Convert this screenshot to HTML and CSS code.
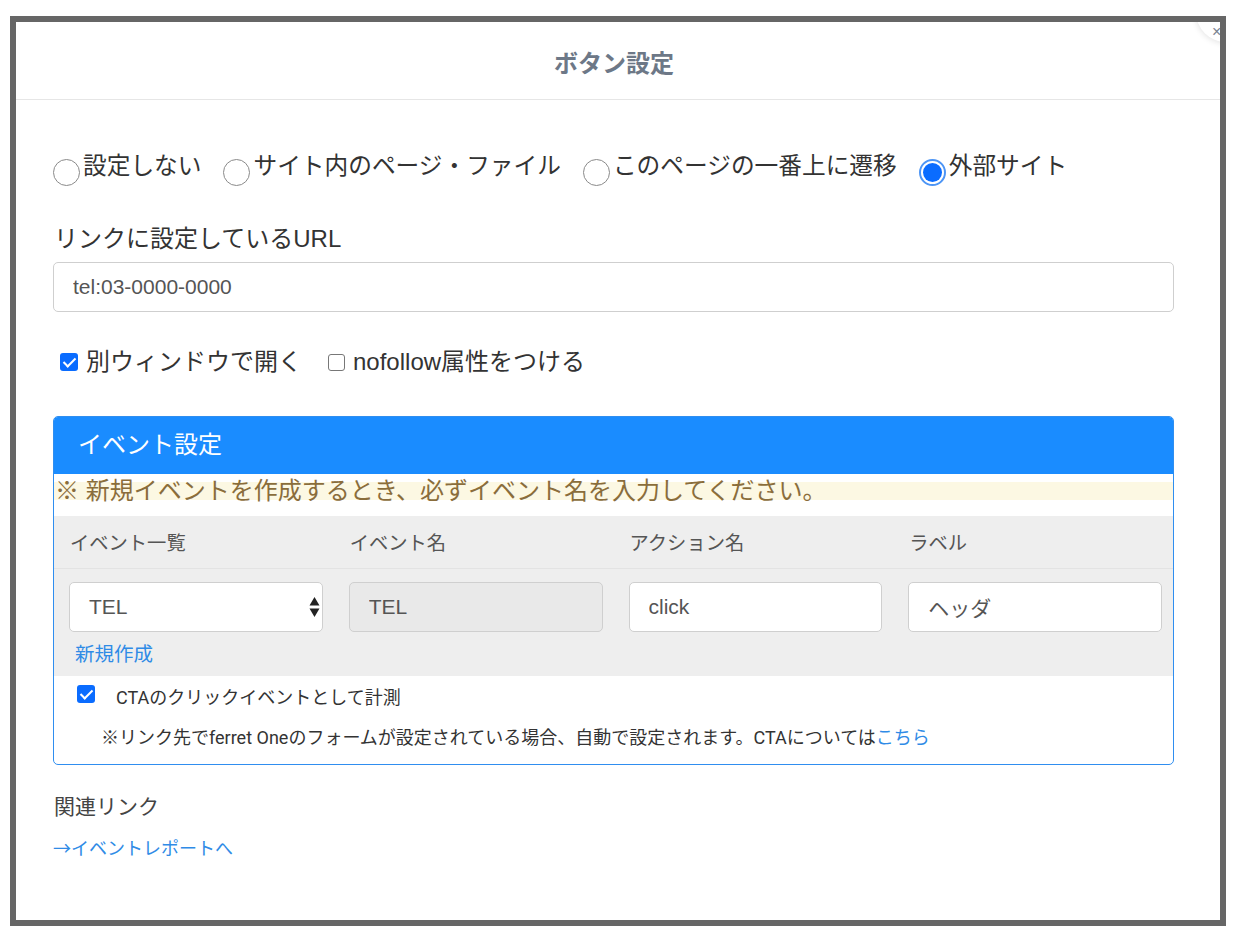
FILE: index.html
```html
<!DOCTYPE html>
<html lang="ja">

<head>
    <meta charset="UTF-8">
    <title>ボタン設定</title>
    <link rel="stylesheet" href="styles.css">
</head>

<body>
    <div class="modal">
        <span class="close">×</span>
        <div class="modal-header">
            <h2>ボタン設定</h2>
        </div>

        <div class="modal-body">
            <!-- リンク先の種類 -->
            <div class="radio-row">
                <label class="radio"><input type="radio" name="link"><span>設定しない</span></label>
                <label class="radio"><input type="radio" name="link"><span>サイト内のページ・ファイル</span></label>
                <label class="radio"><input type="radio" name="link"><span>このページの一番上に遷移</span></label>
                <label class="radio"><input type="radio" name="link" checked><span>外部サイト</span></label>
            </div>

            <p class="field-label">リンクに設定しているURL</p>
            <input class="text-input url-input" type="text" value="tel:03-0000-0000">

            <div class="check-row">
                <label class="check"><input type="checkbox" checked><span>別ウィンドウで開く</span></label>
                <label class="check"><input type="checkbox"><span>nofollow属性をつける</span></label>
            </div>

            <!-- イベント設定 -->
            <div class="event-panel">
                <div class="event-head">イベント設定</div>
                <div class="event-warning">※ 新規イベントを作成するとき、必ずイベント名を入力してください。</div>

                <div class="event-table">
                    <div class="event-row event-row-head">
                        <div class="cell">イベント一覧</div>
                        <div class="cell">イベント名</div>
                        <div class="cell">アクション名</div>
                        <div class="cell">ラベル</div>
                    </div>
                    <div class="event-row">
                        <div class="cell">
                            <div class="text-input select">
                                <span>TEL</span>
                                <svg width="11" height="22" viewBox="0 0 11 22">
                                    <path d="M5.5 1 L10.5 9.5 H0.5 Z" fill="#222" />
                                    <path d="M5.5 21 L10.5 12.5 H0.5 Z" fill="#222" />
                                </svg>
                            </div>
                            <a class="new-link" href="#">新規作成</a>
                        </div>
                        <div class="cell"><input class="text-input" type="text" value="TEL" disabled></div>
                        <div class="cell"><input class="text-input" type="text" value="click"></div>
                        <div class="cell"><input class="text-input" type="text" value="ヘッダ"></div>
                    </div>
                </div>

                <div class="cta">
                    <label class="cta-check"><input type="checkbox" checked><span>CTAのクリックイベントとして計測</span></label>
                    <p class="cta-note">※リンク先でferret Oneのフォームが設定されている場合、自動で設定されます。CTAについては<a href="#">こちら</a></p>
                </div>
            </div>

            <p class="related-title">関連リンク</p>
            <a class="related-link" href="#">→イベントレポートへ</a>
        </div>
    </div>
</body>

</html>
```

FILE: styles.css
```css
* {
    margin: 0;
    padding: 0;
    box-sizing: border-box;
}

body {
    background: #fff;
    font-family: "Liberation Sans", "Noto Sans CJK JP", sans-serif;
    color: #333;
}

a {
    color: #2f8be6;
    text-decoration: none;
}

.modal {
    position: relative;
    margin: 16px 12px 0 10px;
    height: 910px;
    border: 6px solid #666;
    background: #fff;
    overflow: hidden;
}

.close {
    position: absolute;
    left: 1180px;
    top: -40px;
    width: 60px;
    height: 60px;
    border-radius: 50%;
    background: #fff;
    box-shadow: 0 1px 6px rgba(0, 0, 0, 0.12);
    color: #7a8390;
    font-size: 16px;
    line-height: 16px;
    padding: 42px 0 0 16px;
}

.modal-header {
    height: 78px;
    border-bottom: 1px solid #e6e6e6;
    display: flex;
    align-items: center;
    justify-content: center;
    padding-right: 8px;
}

.modal-header h2 {
    font-size: 24px;
    font-weight: bold;
    color: #6d7887;
    padding-top: 2px;
}

.modal-body {
    padding: 48px 46px 0 37px;
}

/* radio */
.radio-row {
    display: flex;
    gap: 22px;
    height: 36px;
}

.radio {
    display: flex;
    align-items: center;
    font-size: 23.7px;
    line-height: 36px;
}

.radio input {
    appearance: none;
    width: 27px;
    height: 27px;
    border: 1.5px solid #8a8a8a;
    border-radius: 50%;
    margin: 12px 3px 0 0;
    background: #fff;
}

.radio input:checked {
    border: 2px solid #4d95f5;
    padding: 2px;
    background: #0a6cff;
    background-clip: content-box;
}

.field-label {
    margin-top: 39px;
    font-size: 24px;
    line-height: 32px;
    padding-left: 1px;
}

.text-input {
    display: block;
    width: 100%;
    height: 50px;
    border: 1px solid #cfcfcf;
    border-radius: 5px;
    background: #fff;
    font-family: "Liberation Sans", "Noto Sans CJK JP", sans-serif;
    font-size: 21px;
    color: #555;
    padding: 0 19px;
    outline: none;
}

.url-input {
    margin-top: 7px;
}

/* checkbox */
.check-row {
    display: flex;
    gap: 26px;
    margin-top: 34px;
    padding-left: 7px;
    height: 32px;
}

.check {
    display: flex;
    align-items: center;
    font-size: 24px;
    line-height: 32px;
}

.check input,
.cta-check input {
    appearance: none;
    position: relative;
    width: 17px;
    height: 17px;
    border: 1.5px solid #777;
    border-radius: 3px;
    margin-right: 8px;
    background: #fff;
}

.check input:checked,
.cta-check input:checked {
    border: none;
    width: 18px;
    height: 18px;
    background: #0a6cff;
}

.check input:checked::after,
.cta-check input:checked::after {
    content: "";
    position: absolute;
    left: 6px;
    top: 2px;
    width: 5px;
    height: 10px;
    border: solid #fff;
    border-width: 0 2.5px 2.5px 0;
    transform: rotate(45deg);
}

/* event panel */
.event-panel {
    margin-top: 38px;
    border: 1px solid #2f8ef0;
    border-radius: 5px;
    overflow: hidden;
}

.event-head {
    height: 57px;
    line-height: 55px;
    background: #1a8cff;
    color: #fff;
    font-size: 24px;
    padding-left: 24px;
}

.event-warning {
    margin-top: 8px;
    height: 18px;
    line-height: 18px;
    background: #fcf8e3;
    color: #8a6d3b;
    font-size: 24px;
    padding-left: 1px;
    white-space: nowrap;
}

.event-table {
    margin-top: 16px;
    background: #eeeeee;
}

.event-row {
    display: grid;
    grid-template-columns: repeat(4, 1fr);
}

.event-row-head {
    height: 53px;
    align-items: center;
    border-bottom: 1px solid #e3e3e3;
    font-size: 19.3px;
    color: #555;
}

.event-row-head .cell {
    padding-left: 16px;
}

.cell {
    padding: 0 11px 0 15px;
}

.event-row .cell .text-input {
    margin-top: 13px;
}

.event-row input:disabled {
    background: #e9e9e9;
}

.select {
    display: flex;
    align-items: center;
    justify-content: space-between;
    padding-right: 2px;
}

.new-link {
    display: block;
    font-size: 19.5px;
    line-height: 22px;
    margin: 11px 0 11px 6px;
}

.cta {
    padding: 8px 0 12px;
    font-family: Roboto, "Noto Sans CJK JP", sans-serif;
    font-size: 18px;
    color: #333;
}

.cta-check {
    display: flex;
    align-items: flex-start;
    line-height: 28px;
    padding-left: 23px;
}

.cta-check input {
    margin: 1px 21px 0 0;
}

.cta-note {
    margin-top: 12px;
    line-height: 28px;
    padding-left: 47px;
}

.related-title {
    margin-top: 28px;
    font-size: 21px;
    line-height: 28px;
    color: #444;
    padding-left: 1px;
}

.related-link {
    display: block;
    margin-top: 13px;
    font-family: "Noto Sans CJK JP", sans-serif;
    font-size: 18px;
    line-height: 26px;
}
```
